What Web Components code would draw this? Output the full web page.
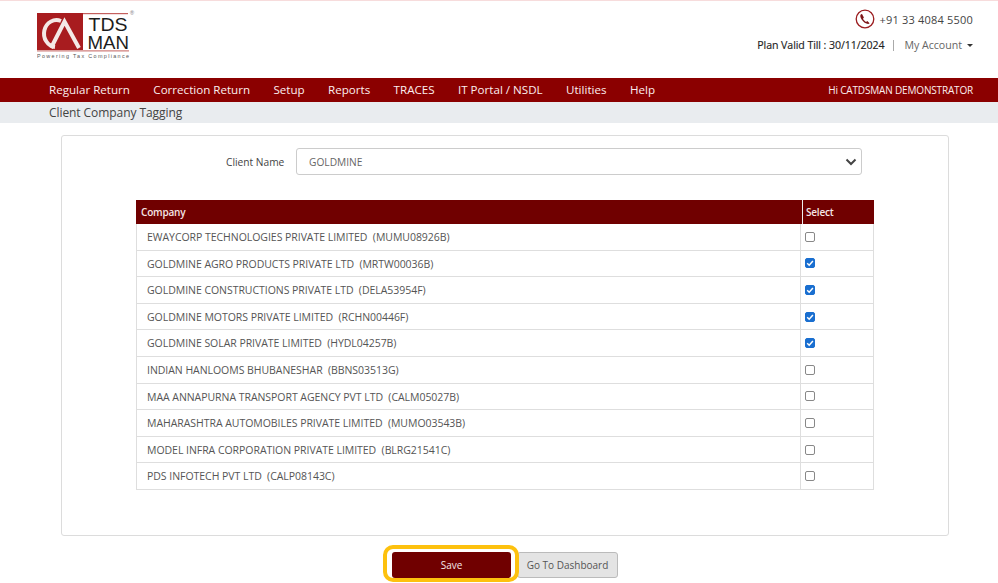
<!DOCTYPE html>
<html><head><meta charset="utf-8"><style>
html,body{margin:0;padding:0;background:#fff}
body{font-family:"Open Sans","Noto Sans",sans-serif;font-size:11px;color:#495057;width:998px;height:583px;overflow:hidden}
</style></head><body>
<app-header></app-header>
<app-nav></app-nav>
<app-crumb>Client Company Tagging</app-crumb>
<tag-card></tag-card>
<action-bar></action-bar>
<script>
const F='"Open Sans","Noto Sans",sans-serif';
function def(name,html,init){customElements.define(name,class extends HTMLElement{constructor(){super();this.attachShadow({mode:'open'}).innerHTML=html;}connectedCallback(){init&&init(this)}})}
def('cat-logo',`<style>:host{display:block;width:98px;height:50px;margin-top:9px}svg{display:block}</style>
<svg width="98" height="50" viewBox="0 0 98 50">
<rect x="0" y="3" width="91" height="1.2" fill="#c4605e"/>
<rect x="0" y="3" width="46" height="37" fill="#a81c1f"/>
<path d="M24 11 A12.5 13.5 0 1 0 18 37" fill="none" stroke="#f4e9e6" stroke-width="4"/>
<path d="M14 38 L27.5 11.5 L42 38" fill="none" stroke="#f4e9e6" stroke-width="4"/>
<text x="51.5" y="21" font-family="Liberation Sans" font-size="19" fill="#1c1c1c" textLength="39" lengthAdjust="spacingAndGlyphs">TDS</text>
<text x="50.5" y="39" font-family="Liberation Sans" font-size="18.5" fill="#1c1c1c" textLength="41.5" lengthAdjust="spacingAndGlyphs">MAN</text>
<rect x="0" y="40.4" width="92" height="1" fill="#c4605e"/>
<text x="0" y="48" font-family="Liberation Sans" font-size="5.4" fill="#555" textLength="92">Powering Tax Compliance</text>
<text x="93" y="5" font-family="Liberation Sans" font-size="5.5" fill="#777">®</text>
</svg>`);
def('app-header',`<style>
:host{display:flex;justify-content:space-between;box-sizing:border-box;height:78px;border-top:1px solid #f7dcdc;background:#fff;font-family:${F};padding:0 25px 0 37px}
.r{display:flex;flex-direction:column;align-items:flex-end;font-size:11px;padding-top:8px}
.ph{display:flex;align-items:center;gap:4px;height:20px;color:#444;font-size:11px;letter-spacing:.2px}
.pl{display:flex;align-items:center;margin-top:7px;height:18px;color:#333;font-size:10.6px}
.pl b{font-weight:400;color:#222;letter-spacing:-.08px;-webkit-text-stroke:.15px #222}
.sep{width:1px;height:11px;background:#aaa;margin:0 10px 0 9px}
.ac{color:#666}
.car{display:inline-block;border:3px solid transparent;border-top-color:#333;border-bottom:0;margin-left:5px;vertical-align:2px}
</style>
<cat-logo></cat-logo>
<div class="r"><div class="ph"><svg width="20" height="20" viewBox="0 0 20 20"><circle cx="10" cy="10" r="8.8" fill="none" stroke="#9b1c1f" stroke-width="1.3"/><path d="M6 5.2c-.9.8-.9 2.2-.2 3.7 1.1 2.4 3.2 4.6 5.6 5.7 1.4.6 2.6.5 3.2-.4l-2.3-2.1-1.3.8c-1.2-.7-2.4-2-3-3.2l.9-1.3L7 5z" fill="#7d1518"/></svg><span>+91 33 4084 5500</span></div>
<div class="pl"><b>Plan Valid Till : 30/11/2024</b><span class="sep"></span><span class="ac">My Account<i class="car"></i></span></div></div>`);
def('app-nav',`<style>
:host{display:flex;justify-content:space-between;align-items:center;box-sizing:border-box;height:24px;background:#8b0000;color:#fbeeee;font-family:${F};padding:0 25px 2px 49px;font-size:11.6px}
nav{display:flex;gap:23.4px}
.hi{font-size:10px;letter-spacing:-.17px;padding-top:2px}
</style><nav><span>Regular Return</span><span>Correction Return</span><span>Setup</span><span>Reports</span><span>TRACES</span><span>IT Portal / NSDL</span><span>Utilities</span><span>Help</span></nav><span class="hi">Hi CATDSMAN DEMONSTRATOR</span>`);
def('app-crumb',`<style>:host{display:block;box-sizing:border-box;height:21px;background:#e9ecef;color:#444;font-family:${F};font-size:12px;line-height:21px;padding-left:49px;letter-spacing:-.07px}</style><slot></slot>`);
def('tag-check',`<style>:host{display:block;width:10px;height:10px;box-sizing:border-box;border-radius:2px;border:1px solid #888;background:#fff}
:host([on]){background:#1a6fd0;border-color:#1a6fd0}svg{display:none}:host([on]) svg{display:block;margin:-1px}</style>
<svg width="10" height="10" viewBox="0 0 10 10"><path d="M2.2 5.2 L4.2 7.2 L7.9 3" fill="none" stroke="#fff" stroke-width="1.5"/></svg>`);
def('tag-row',`<style>:host{display:flex;box-sizing:border-box;height:26.6px;border-bottom:1px solid #dedede;color:#555;font-size:10.5px;letter-spacing:-.04px}
.c{flex:1;padding-left:10px;line-height:26px;white-space:pre}
.s{box-sizing:border-box;width:73px;border-left:1px solid #dedede;display:flex;align-items:center;padding-left:4px}
</style><div class="c"><slot></slot></div><div class="s"><tag-check></tag-check></div>`,el=>{if(el.hasAttribute('on'))el.shadowRoot.querySelector('tag-check').setAttribute('on','')});
def('tag-table',`<style>:host{display:block;width:738px;margin:25px 0 0 74px;box-sizing:border-box;border:solid #dedede;border-width:0 1px 0 1px}
.h{display:flex;height:24px;background:#700000;color:#f6e6e6;font-size:10px;font-weight:600;line-height:24px;margin:0 -1px;letter-spacing:-.2px}
.h .a{flex:1;padding-left:5px}.h .b{box-sizing:border-box;width:72px;border-left:1px solid #eee;padding-left:3px}
</style><div class="h"><div class="a">Company</div><div class="b">Select</div></div><slot></slot>`);
def('tag-card',`<style>:host{display:block;box-sizing:border-box;width:888px;height:401px;margin:12px 0 0 61px;border:1px solid #dcdcdc;border-radius:3px;background:#fff;font-family:${F};padding-top:12px}
.f{display:flex;align-items:center;height:27px;padding-left:164px;font-size:10.2px;color:#444}
.l{width:70px}
.sel{box-sizing:border-box;width:566px;height:27px;border:1px solid #ccc;border-radius:3px;display:flex;align-items:center;justify-content:space-between;padding:0 4px 0 12px;color:#666;font-size:10.2px}
</style><div class="f"><span class="l">Client Name</span><div class="sel"><span>GOLDMINE</span><svg width="12" height="8" viewBox="0 0 12 8"><path d="M1.5 1.5 L6 6 L10.5 1.5" fill="none" stroke="#444" stroke-width="2"/></svg></div></div>
<tag-table>
<tag-row>EWAYCORP TECHNOLOGIES PRIVATE LIMITED  (MUMU08926B)</tag-row>
<tag-row on>GOLDMINE AGRO PRODUCTS PRIVATE LTD  (MRTW00036B)</tag-row>
<tag-row on>GOLDMINE CONSTRUCTIONS PRIVATE LTD  (DELA53954F)</tag-row>
<tag-row on>GOLDMINE MOTORS PRIVATE LIMITED  (RCHN00446F)</tag-row>
<tag-row on>GOLDMINE SOLAR PRIVATE LIMITED  (HYDL04257B)</tag-row>
<tag-row>INDIAN HANLOOMS BHUBANESHAR  (BBNS03513G)</tag-row>
<tag-row>MAA ANNAPURNA TRANSPORT AGENCY PVT LTD  (CALM05027B)</tag-row>
<tag-row>MAHARASHTRA AUTOMOBILES PRIVATE LIMITED  (MUMO03543B)</tag-row>
<tag-row>MODEL INFRA CORPORATION PRIVATE LIMITED  (BLRG21541C)</tag-row>
<tag-row>PDS INFOTECH PVT LTD  (CALP08143C)</tag-row>
</tag-table>`);
def('action-bar',`<style>:host{display:flex;margin:16px 0 0 392px;gap:6px;font-family:${F};font-size:10px}
.b{box-sizing:border-box;height:26px;border-radius:3px;display:flex;align-items:center;justify-content:center}
.s{width:119px;background:#700000;color:#f5e8e8;position:relative}
.s::after{content:"";position:absolute;inset:-7px -8px -4px -9px;border:4px solid #fdc10e;border-radius:10px}
.d{width:101px;background:#e4e4e4;border:1px solid #bbb;color:#555}
</style><div class="b s">Save</div><div class="b d">Go To Dashboard</div>`);
</script></body></html>
